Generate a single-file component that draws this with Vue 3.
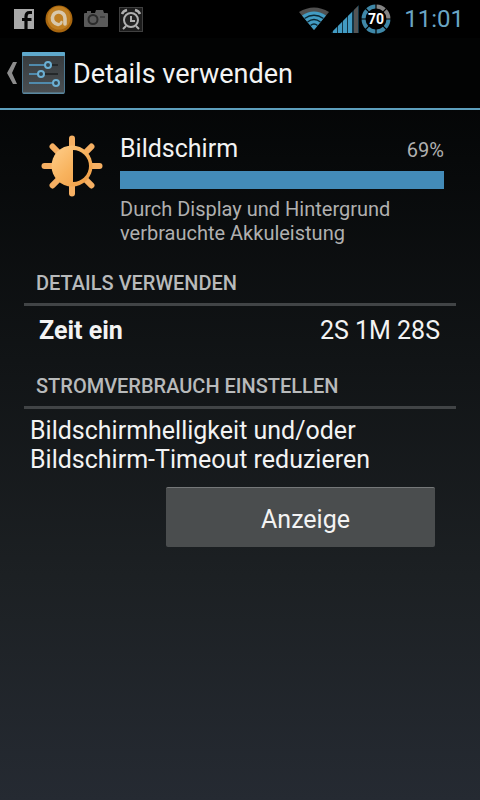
<script setup>
import { ref } from 'vue'

const usage = ref(69)
const batteryLevel = ref(70)
const clock = ref('11:01')

// signal bars, the last one is not filled
const bars = [
    { x: 2, y: 25, on: true },
    { x: 7, y: 20, on: true },
    { x: 12, y: 15, on: true },
    { x: 17, y: 10, on: true },
    { x: 23, y: 4, on: false }
]

// battery ring, clockwise from the top
const segments = []
for (let i = 0; i < 8; i++){
    segments.push({ angle: i * 45 + 22.5, on: i >= 2 })
}

const rays = [0, 45, 90, 135, 180, 225, 270, 315]
</script>

<template>
    <div class="screen">
        <div class="statusbar">
            <div class="notifications">
                <svg width="20" height="20" viewBox="0 0 20 20">
                    <rect width="20" height="20" fill="#a9a9a9" />
                    <path d="M18 3.500h-2.500q-3.500 0-3.500 4V20M8 10.500h9.500" fill="none" stroke="#080808" stroke-width="3.200" />
                </svg>
                <svg width="28" height="28" viewBox="0 0 28 28">
                    <circle cx="14" cy="14" r="13.500" fill="#a8660f" />
                    <circle cx="14" cy="13" r="11.500" fill="#c07f22" />
                    <path d="M13 19.500A6.300 6.300 0 1 1 20 13.500V19" fill="none" stroke="#d8c8ac" stroke-width="3.600" stroke-linecap="round" />
                    <path d="M13 19.500q3 0 3.500-2.500" fill="none" stroke="#d8c8ac" stroke-width="2.500" stroke-linecap="round" />
                </svg>
                <svg width="24" height="18" viewBox="0 0 24 18">
                    <path d="M1 3h2V1h4v2h4l1-3h7l1 3h3q1 0 1 1v12q0 1-1 1H1q-1 0-1-1V4q0-1 1-1z" fill="#5a5a5a" />
                    <circle cx="9" cy="9.500" r="4.500" fill="#5a5a5a" stroke="#2a2a2a" stroke-width="2" />
                    <rect x="16" y="6" width="5" height="2" fill="#404040" />
                </svg>
                <svg width="24" height="25" viewBox="0 0 24 25">
                    <rect x="0.500" y="0.500" width="23" height="24" fill="#1c1c1c" stroke="#404040" />
                    <circle cx="12" cy="13" r="7" fill="#222" stroke="#b0b0b0" stroke-width="2" />
                    <path d="M12 9v5h4M7 19l-3 3M17 19l3 3" fill="none" stroke="#b0b0b0" stroke-width="2" />
                    <path d="M3 7q1-3 5-4M21 7q-1-3-5-4" fill="none" stroke="#b0b0b0" stroke-width="2.500" />
                </svg>
            </div>
            <div class="system">
                <svg width="30" height="24" viewBox="0 0 30 24">
                    <path d="M0 5Q15-4 30 5L15 23z" fill="#505050" />
                    <path d="M3 8.500Q15 0.500 27 8.500L15 23z" fill="#429bc3" />
                    <path d="M5.500 11.500Q15 5 24.500 11.500M8.500 15Q15 10 21.500 15M11.500 18.500Q15 15.500 18.500 18.500" fill="none" stroke="#0a2632" stroke-width="1.400" />
                </svg>
                <svg width="28" height="28" viewBox="0 0 28 28">
                    <path d="M0 28L28 0V28z" fill="#123444" />
                    <path v-for="bar in bars" :key="bar.x" :d="`M${bar.x} 28V${bar.y + 1}L${bar.x + 4} ${bar.y - 3}V28z`" :fill="bar.on ? '#429bc3' : '#555'" />
                </svg>
                <svg width="30" height="30" viewBox="0 0 30 30">
                    <path v-for="s in segments" :key="s.angle" d="M10.800 3.300Q15 1.600 19.200 3.300" fill="none" stroke-width="4" :stroke="s.on ? '#3f88a8' : '#858585'" :transform="`rotate(${s.angle} 15 15)`" />
                    <text x="15" y="20" class="level">{{ batteryLevel }}</text>
                </svg>
                <span class="clock">{{ clock }}</span>
            </div>
        </div>

        <header class="actionbar">
            <button class="up" aria-label="Zurück">
                <svg width="10" height="22" viewBox="0 0 10 22">
                    <path d="M6 0h4L5 11l5 11H6L0 11z" fill="#8c8c8c" />
                </svg>
                <svg width="43" height="42" viewBox="0 0 43 42">
                    <defs>
                        <linearGradient id="tile" x1="0" y1="0" x2="0" y2="1">
                            <stop offset="0" stop-color="#363b3e" />
                            <stop offset="1" stop-color="#4a4f52" />
                        </linearGradient>
                    </defs>
                    <rect x="0.500" y="0.500" width="42" height="41" rx="1" fill="url(#tile)" stroke="#4c7890" />
                    <rect x="0" y="0" width="43" height="4" rx="1" fill="#5fa9cc" />
                    <path d="M1 41h41" stroke="#6595ad" />
                    <path d="M30 13h6M22 22h14" stroke="#24282a" stroke-width="2" />
                    <path d="M7 13h16M7 22h9M7 31h24" stroke="#508bad" stroke-width="2" />
                    <g fill="#34464f" stroke="#6cb0d4" stroke-width="2">
                        <circle cx="26" cy="13" r="3" />
                        <circle cx="19" cy="22" r="3" />
                        <circle cx="34" cy="31" r="3" />
                    </g>
                </svg>
            </button>
            <h1>Details verwenden</h1>
        </header>

        <main>
            <section class="summary">
                <svg class="sun" width="62" height="62" viewBox="0 0 62 62">
                    <defs>
                        <linearGradient id="sun" x1="0" y1="0" x2="1" y2="1">
                            <stop offset="0" stop-color="#ffcf8c" />
                            <stop offset="0.500" stop-color="#f8b35e" />
                            <stop offset="1" stop-color="#ee9a43" />
                        </linearGradient>
                    </defs>
                    <path v-for="r in rays" :key="r" d="M28 13V3.500a3 3 0 0 1 6 0V13z" fill="#f6b063" :transform="`rotate(${r} 31 31)`" />
                    <circle cx="31" cy="31" r="20.500" fill="url(#sun)" />
                    <path d="M32 15a16 16 0 0 1 0 32z" fill="#060707" />
                </svg>
                <div class="info">
                    <div class="line">
                        <h2>Bildschirm</h2>
                        <span class="percent">{{ usage }}%</span>
                    </div>
                    <div class="bar"></div>
                    <p>Durch Display und Hintergrund verbrauchte Akkuleistung</p>
                </div>
            </section>

            <section>
                <h3>DETAILS VERWENDEN</h3>
                <div class="row">
                    <b>Zeit ein</b>
                    <span>2S 1M 28S</span>
                </div>
            </section>

            <section>
                <h3>STROMVERBRAUCH EINSTELLEN</h3>
                <p class="hint">Bildschirmhelligkeit und/oder Bildschirm-Timeout reduzieren</p>
                <div class="actions">
                    <button class="display">Anzeige</button>
                </div>
            </section>
        </main>
    </div>
</template>

<style>
body{
    margin: 0;
    background: #000;
}
</style>

<style scoped>
.screen{
    min-height: 100vh;
    box-sizing: border-box;
    color: #f3f3f3;
    font-family: Roboto, sans-serif;
    background: linear-gradient(#000, #07090a 20%, #111416 45%, #1c2023 72%, #252a32);
}

svg{
    display: block;
    flex: none;
}

h1, h2, h3, p{
    margin: 0;
    font-weight: 400;
}

button{
    border: 0;
    padding: 0;
    color: inherit;
    font-family: inherit;
}

.statusbar{
    display: flex;
    justify-content: space-between;
    height: 38px;
    padding: 0 16px 0 14px;
    background: #000;
}

.notifications, .system{
    display: flex;
    align-items: center;
}

.notifications{
    gap: 11px;
}

.system{
    gap: 2px;
}

.level{
    font-size: 14px;
    font-weight: 700;
    text-anchor: middle;
    fill: #fff;
}

.clock{
    margin-left: 11px;
    color: #6aa5c4;
    font-size: 24px;
}

.actionbar{
    display: flex;
    align-items: center;
    height: 70px;
    gap: 8px;
    padding-left: 7px;
    background: #020303;
    border-bottom: 2px solid #5d9fbd;
}

.up{
    display: flex;
    align-items: center;
    gap: 5px;
    background: none;
}

h1{
    padding-top: 2px;
    font-size: 27px;
}

main{
    padding: 22px 24px 0;
}

.summary{
    display: flex;
    gap: 17px;
    padding: 0 12px 0 17px;
    margin-bottom: 25px;
}

.sun{
    margin-top: 3px;
}

.info{
    flex: 1;
}

.line{
    display: flex;
    justify-content: space-between;
    align-items: baseline;
    line-height: 34px;
}

h2{
    font-size: 25px;
}

.percent{
    color: #b0b0b0;
    font-size: 20px;
}

.bar{
    height: 18px;
    margin: 4px 0 8px;
    background: #438bb8;
}

.info p{
    max-width: 300px;
    color: #b0b0b0;
    font-size: 20px;
    line-height: 24px;
}

h3{
    padding: 0 12px 7px;
    color: #b8babb;
    font-size: 20px;
    font-weight: 500;
    line-height: 26px;
    border-bottom: 3px solid #414446;
}

.row{
    display: flex;
    justify-content: space-between;
    padding: 9px 16px 26px 15px;
    font-size: 25px;
    line-height: 32px;
}

.hint{
    max-width: 380px;
    padding: 7px 6px 0;
    font-size: 25px;
    line-height: 29px;
}

.actions{
    display: flex;
    justify-content: flex-end;
    padding: 13px 21px 0 0;
}

.display{
    width: 269px;
    height: 60px;
    padding: 3px 0 0 10px;
    font-size: 25px;
    background: #4a4d4e;
    border-top: 1px solid #757879;
    border-radius: 2px;
}
</style>
